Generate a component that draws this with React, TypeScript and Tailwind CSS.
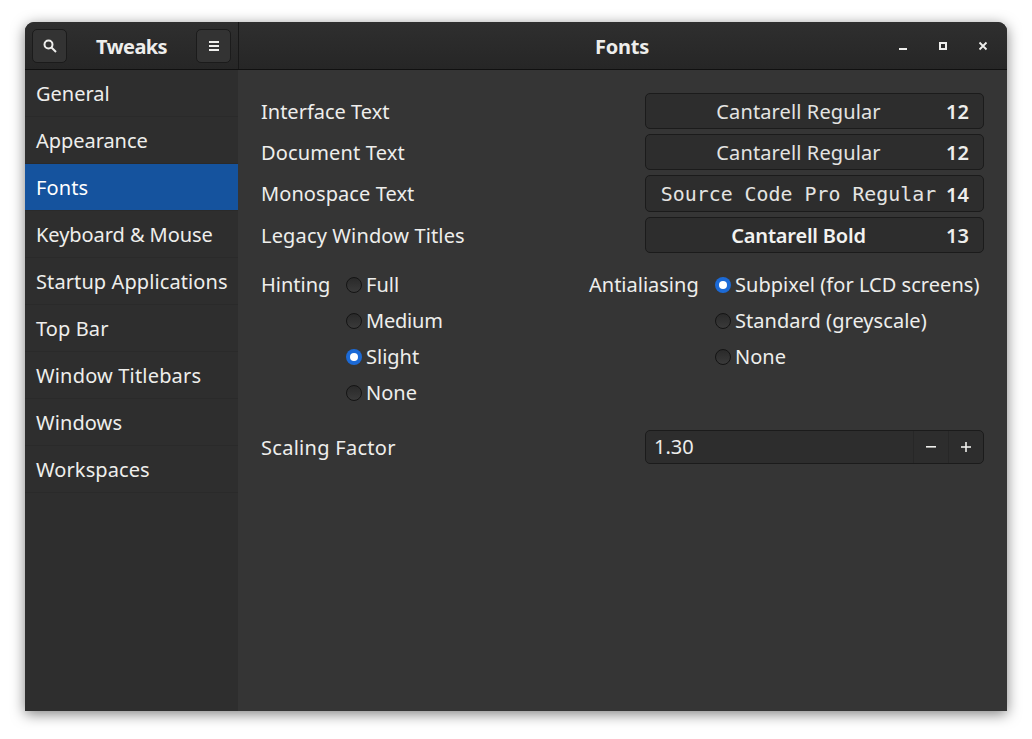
import React from "react";

const sidebar = [
  { t: "General", c: "" },
  { t: "Appearance", c: "tracking-[-0.05px]" },
  { t: "Fonts", c: "tracking-[0.1px]" },
  { t: "Keyboard & Mouse", c: "tracking-[-0.06px]" },
  { t: "Startup Applications", c: "tracking-[0.1px]" },
  { t: "Top Bar", c: "tracking-[0.1px]" },
  { t: "Window Titlebars", c: "tracking-[0.18px]" },
  { t: "Windows", c: "tracking-[0.1px]" },
  { t: "Workspaces", c: "tracking-[0.1px]" },
];

function Radio({ on, label, tc }: { on?: boolean; label: string; tc?: string }) {
  return (
    <div className="flex items-center h-[36px] text-[20px] text-[#eeeeec]">
      {on ? (
        <span className="w-4 h-4 rounded-full bg-[#1c6ad6] flex items-center justify-center mr-[4px]">
          <span className="w-[8px] h-[8px] rounded-full bg-white" />
        </span>
      ) : (
        <span className="w-4 h-4 rounded-full border border-[#141414] bg-gradient-to-b from-[#2a2a2a] to-[#3a3a3a] mr-[4px]" />
      )}
      <span className={tc}>{label}</span>
    </div>
  );
}

function FontRow({ label, name, size, nameClass, labelClass, heightClass }: { label: string; name: string; size: string; nameClass: string; labelClass: string; heightClass: string }) {
  return (
    <div className="flex items-center mb-[5px]">
      <div className={labelClass}>{label}</div>
      <div className={heightClass}>
        <span className={nameClass}>{name}</span>
        <span className="w-[32px] text-right text-[20px] font-semibold text-[#eeeeec] pt-[2px]">{size}</span>
      </div>
    </div>
  );
}

const box = "w-[339px] flex items-center rounded-[5px] border border-[#1b1b1b] bg-[#2d2d2d] text-[#e4e4e2] pl-[14px] pr-[14px]";

export default function App() {
  return (
    <div className="w-[1032px] h-[739px] bg-white pl-[25px] pt-[22px] font-['Noto_Sans',sans-serif] overflow-hidden">
      <div className="w-[982px] h-[689px] flex flex-col rounded-t-[9px] overflow-hidden bg-[#353535] shadow-[0_3px_14px_rgba(0,0,0,0.5)]">
        <header className="h-[48px] flex border-b border-[#101010] bg-gradient-to-b from-[#2f2f2f] to-[#262626]">
          <div className="w-[214px] flex items-center justify-between px-[7px] border-r border-[#181818]">
            <button className="w-[35px] h-[34px] rounded-[5px] border border-[#1b1b1b] bg-[#333333] flex items-center justify-center">
              <svg width="16" height="16" viewBox="0 0 16 16" fill="none" stroke="#eeeeec" strokeWidth="2"><circle cx="6.5" cy="6.5" r="4" /><path d="M9.5 9.5L14 14" /></svg>
            </button>
            <span className="text-[20px] font-bold tracking-[-0.6px] text-[#eeeeec] pt-[2px]">Tweaks</span>
            <button className="w-[35px] h-[34px] rounded-[5px] border border-[#1b1b1b] bg-[#333333] flex items-center justify-center">
              <svg width="12" height="12" viewBox="0 0 12 12" fill="#eeeeec"><rect x="1" y="1" width="10" height="2" /><rect x="1" y="5" width="10" height="2" /><rect x="1" y="9" width="10" height="2" /></svg>
            </button>
          </div>
          <div className="flex-1 relative flex items-center justify-center">
            <span className="text-[20px] font-bold tracking-[-0.2px] text-[#eeeeec] pt-[2px] mr-[2px]">Fonts</span>
            <div className="absolute right-[4px] top-0 bottom-0 flex items-center">
              <span className="w-[40px] flex justify-center"><svg width="10" height="10" viewBox="0 0 10 10" fill="#eeeeec"><rect x="1" y="7" width="8" height="2" /></svg></span>
              <span className="w-[40px] flex justify-center"><svg width="10" height="10" viewBox="0 0 10 10" fill="none" stroke="#eeeeec" strokeWidth="2"><rect x="2" y="2" width="6" height="6" /></svg></span>
              <span className="w-[40px] flex justify-center"><svg width="10" height="10" viewBox="0 0 10 10" fill="none" stroke="#eeeeec" strokeWidth="1.8"><path d="M1.5 1.5L8.5 8.5M8.5 1.5L1.5 8.5" /></svg></span>
            </div>
          </div>
        </header>
        <div className="flex-1 flex min-h-0">
          <aside className="w-[213px] bg-[#2e2e2e]">
            {sidebar.map((s) => (
              <div key={s.t} className={"h-[47px] flex items-center border-b border-[#2a2a2a] pl-[11px] pt-[2px] text-[20px] " + s.c + (s.t === "Fonts" ? " text-white bg-[#15539e]" : " text-[#eeeeec]")}>{s.t}</div>
            ))}
          </aside>
          <main className="flex-1 pl-[23px] pr-[23px] pt-[23px]">
            <FontRow label="Interface Text" labelClass="w-[384px] pt-[2px] text-[20px] text-[#eeeeec]" heightClass={box + " h-[36px]"} nameClass="w-[277px] pt-[2px] text-center text-[20px] tracking-[0.12px]" name="Cantarell Regular" size="12" />
            <FontRow label="Document Text" labelClass="w-[384px] pt-[2px] text-[20px] tracking-[0.15px] text-[#eeeeec]" heightClass={box + " h-[36px]"} nameClass="w-[277px] pt-[2px] text-center text-[20px] tracking-[0.12px]" name="Cantarell Regular" size="12" />
            <FontRow label="Monospace Text" labelClass="w-[384px] text-[20px] tracking-[0.08px] text-[#eeeeec]" heightClass={box + " h-[37px]"} nameClass="w-[277px] pt-[2px] text-center font-['DejaVu_Sans_Mono',monospace] text-[19.9px] whitespace-nowrap" name="Source Code Pro Regular" size="14" />
            <FontRow label="Legacy Window Titles" labelClass="w-[384px] pt-[2px] text-[20px] tracking-[0.15px] text-[#eeeeec]" heightClass={box + " h-[36px]"} nameClass="w-[277px] pt-[2px] text-center text-[20px] font-semibold tracking-[-0.2px] text-[#f2f2f0]" name="Cantarell Bold" size="13" />
            <div className="flex mt-[14px]">
              <div className="w-[85px] h-[36px] flex items-center text-[20px] text-[#eeeeec]">Hinting</div>
              <div className="w-[243px]">
                <Radio label="Full" /><Radio label="Medium" tc="tracking-[-0.2px]" /><Radio on label="Slight" /><Radio label="None" />
              </div>
              <div className="w-[126px] h-[36px] flex items-center text-[20px] text-[#eeeeec]">Antialiasing</div>
              <div>
                <Radio on label="Subpixel (for LCD screens)" tc="tracking-[0.04px]" /><Radio label="Standard (greyscale)" tc="tracking-[0.05px]" /><Radio label="None" />
              </div>
            </div>
            <div className="flex items-center mt-[19px]">
              <div className="w-[384px] pt-[2px] text-[20px] tracking-[0.28px] text-[#eeeeec]">Scaling Factor</div>
              <div className="w-[339px] h-[34px] flex items-center rounded-[5px] border border-[#1b1b1b] bg-[#2d2d2d] text-[20px] text-[#eeeeec]">
                <span className="flex-1 pl-[8px]">1.30</span>
                <span className="w-[35px] h-full flex items-center justify-center border-l border-[#272727]"><svg width="10" height="10" viewBox="0 0 10 10" fill="#eeeeec"><rect x="0" y="4" width="10" height="1.6" /></svg></span>
                <span className="w-[35px] h-full flex items-center justify-center border-l border-[#272727]"><svg width="10" height="10" viewBox="0 0 10 10" fill="#eeeeec"><rect x="0" y="4.2" width="10" height="1.6" /><rect x="4.2" y="0" width="1.6" height="10" /></svg></span>
              </div>
            </div>
          </main>
        </div>
      </div>
    </div>
  );
}
